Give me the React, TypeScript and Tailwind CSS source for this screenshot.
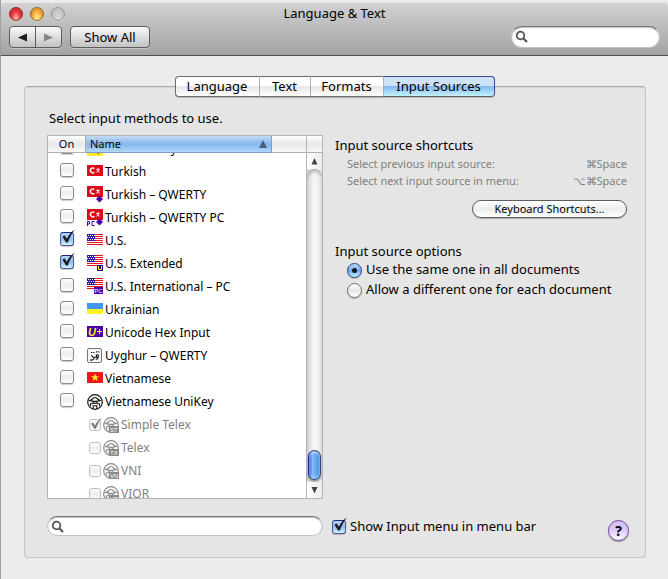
import { useState } from 'react';
import type { ReactNode } from 'react';
import clsx from 'clsx';

type Badge = 'diamond' | 'pc-diamond' | 'U' | 'PC';

const Icon = ({ children }: { children: ReactNode }) => (
  <svg viewBox="0 0 16 18" className="mt-[3px] h-[18px] w-4 shrink-0 self-start" aria-hidden="true">
    {children}
  </svg>
);

const Diamond = () => <path d="M12.5 9.5 16 13l-3.5 3.5L9 13z" fill="#4a00a8" />;

const Turkey = ({ badge }: { badge?: Badge }) => (
  <Icon>
    <g transform={badge ? undefined : 'translate(0 2)'}>
      <rect width="16" height="11" fill="#dd0a18" />
      <path d="M7.4 3.6A2.4 2.4 0 1 0 7.4 7.2" fill="none" stroke="#fff" strokeWidth="1.4" />
      <path d="M9.2 4.3 11 5.2M12.8 4.3 11 5.2M11 3v2.2M11 5.2 9.700 7.500M11 5.200l1.300 2.300" stroke="#fff" strokeWidth=".9" />
    </g>
    {badge && <Diamond />}
    {badge === 'pc-diamond' && (
      <path d="M.5 17v-4.500h2v2.500h-2M7.500 12.500H5v4h2.500" fill="none" stroke="#4a00a8" />
    )}
  </Icon>
);

const UnitedStates = ({ badge }: { badge?: Badge }) => (
  <Icon>
    <g transform={badge ? undefined : 'translate(0 2)'}>
      <rect width="16" height="11" fill="#fff" />
      <path d="M0 .5h16M0 2.5h16M0 4.5h16M0 6.5h16M0 8.5h16M0 10.5h16" stroke="#ee1018" />
      <rect width="8" height="7" fill="#2e16a4" />
      <path d="M1 1.5h7M0 3.5h7M1 5.5h7" stroke="#fff" strokeDasharray="1 1" />
    </g>
    {badge === 'U' && (
      <>
        <rect x="10" y="10" width="6" height="6" fill="#25107c" />
        <path d="M11.5 11v3.5h3V11" fill="none" stroke="#ffee22" />
      </>
    )}
    {badge === 'PC' && (
      <>
        <rect x="7" y="9" width="9" height="7" fill="#4a00a8" />
        <text x="7.2" y="14.8" fontSize="6" fontFamily="Liberation Sans" fill="#fff">PC</text>
      </>
    )}
  </Icon>
);

const Ukraine = () => (
  <Icon>
    <rect y="2" width="16" height="6" fill="#3f97ff" />
    <rect y="8" width="16" height="5" fill="#fdf51e" />
  </Icon>
);

const UnicodeHex = () => (
  <Icon>
    <rect y="2" width="16" height="11" fill="#4a00a8" />
    <text x="1" y="11.5" fontSize="11" fontWeight="bold" fontStyle="italic" fontFamily="Liberation Sans" fill="#ffef24">U</text>
    <path d="M10 7.5h5M12.5 5v5" stroke="#ffef24" />
  </Icon>
);

const Uyghur = () => (
  <Icon>
    <rect x=".5" y="1.5" width="14" height="14" rx="1.5" fill="#f6f6f6" stroke="#777" />
    <path
      d="M3 13c2.500.5 4-.5 4.200-2.800M4 8.800c1.500 0 1.800 1.800 3 1.500h2.500c2.300 0 2.600-2.600.8-2.600-1.400 0-1.500 1.700 0 2M11.500 10c-.5 1.500-1.500 2.300-2.800 2.500"
      fill="none"
      stroke="#111"
      strokeWidth="1.1"
    />
    <path d="M4 5.5h1.3M6.3 5.5h1.3M9 4.8h1.2M11.2 4.8h1.2" stroke="#111" strokeWidth="1.2" />
  </Icon>
);

const Vietnam = () => (
  <Icon>
    <rect y="2" width="16" height="11" fill="#f5141a" />
    <path d="m8 3.4 1 2.9h3.1L9.600 8.100l1 2.900L8 9.200 5.400 11l1-2.900-2.500-1.800H7z" fill="#fff021" />
  </Icon>
);

const Tibet = () => (
  <Icon>
    <rect y="2" width="16" height="14" fill="#ffee22" />
    <path d="M4 10l3 3M12 8 9 12h4M6 9l6 5" fill="none" stroke="#c8601c" strokeWidth="1.3" />
  </Icon>
);

const UniKey = ({ badge }: { badge?: string }) => {
  const ink = badge ? '#8a8a8a' : '#161616';
  return (
    <Icon>
      <circle cx="8" cy="9" r="7.3" fill="#fff" stroke={ink} strokeWidth="1.2" />
      <path
        d="M2.800 7.500C5.500 7 6 4.500 8 4.500s2.500 2.500 5.200 3C11 8.700 5 8.700 2.800 7.500zM5.800 8.400c0 2.600 4.400 2.600 4.400 0M6.200 10.800H3.500v2.500M9.800 10.800h2.700v2.500M6.200 16v-3.200h3.600V16"
        fill="none"
        stroke={ink}
        strokeWidth="1.1"
      />
      {badge && (
        <>
          <rect x="6" y="10" width="10" height="7" fill="#8a8a8a" />
          <text x="7" y="15.700" fontSize="6" fontFamily="Liberation Sans" fill="#fff">{badge}</text>
        </>
      )}
    </Icon>
  );
};

interface Source {
  name: string;
  icon: ReactNode;
  on?: boolean;
  child?: boolean;
}

const sources: Source[] = [
  { name: 'Tibetan – Wylie', icon: <Tibet /> },
  { name: 'Turkish', icon: <Turkey /> },
  { name: 'Turkish – QWERTY', icon: <Turkey badge="diamond" /> },
  { name: 'Turkish – QWERTY PC', icon: <Turkey badge="pc-diamond" /> },
  { name: 'U.S.', icon: <UnitedStates />, on: true },
  { name: 'U.S. Extended', icon: <UnitedStates badge="U" />, on: true },
  { name: 'U.S. International – PC', icon: <UnitedStates badge="PC" /> },
  { name: 'Ukrainian', icon: <Ukraine /> },
  { name: 'Unicode Hex Input', icon: <UnicodeHex /> },
  { name: 'Uyghur – QWERTY', icon: <Uyghur /> },
  { name: 'Vietnamese', icon: <Vietnam /> },
  { name: 'Vietnamese UniKey', icon: <UniKey /> },
  { name: 'Simple Telex', icon: <UniKey badge="ST" />, on: true, child: true },
  { name: 'Telex', icon: <UniKey badge="TX" />, child: true },
  { name: 'VNI', icon: <UniKey badge="VN" />, child: true },
  { name: 'VIQR', icon: <UniKey badge="VR" />, child: true },
];

interface CheckboxProps {
  id: string;
  defaultChecked?: boolean;
  disabled?: boolean;
}

const Checkbox = ({ id, defaultChecked, disabled }: CheckboxProps) => (
  <span className={clsx('relative block shrink-0', disabled ? 'size-3' : 'size-3.5')}>
    <input
      id={id}
      type="checkbox"
      defaultChecked={defaultChecked}
      disabled={disabled}
      className={clsx(
        'peer block size-full appearance-none rounded-[3px] border bg-linear-to-b from-white via-[#ececec] to-white',
        disabled
          ? 'border-[#bdbdbd]'
          : 'border-[#8a8a8a] shadow-[0_1px_1px_#00000033] checked:border-[#4d5a94] checked:border-t-[#1c2a86] checked:from-[#b9d3f5] checked:via-[#8fbdf0] checked:to-[#d3f4ff]'
      )}
    />
    <svg
      viewBox="0 0 16 16"
      className={clsx(
        'pointer-events-none absolute hidden peer-checked:block',
        disabled ? '-top-0.5 left-0 size-3.5 text-[#777]' : '-top-[3px] left-0 size-4 text-[#15181f]'
      )}
      aria-hidden="true"
    >
      <path d="M2.500 7.500 4.800 6.500 6.800 10C8.500 6 11 3 14.800.500 11.800 4.500 9.500 8.500 7.800 13.500H6z" fill="currentColor" />
    </svg>
  </span>
);

const SearchField = ({ label, className }: { label: string; className: string }) => (
  <label className={clsx('relative block', className)}>
    <svg viewBox="0 0 14 14" className="absolute top-1 left-1 size-3.5" aria-hidden="true">
      <circle cx="5.500" cy="5.500" r="3.800" fill="none" stroke="#555" strokeWidth="1.800" />
      <path d="m8.500 8.500 3.500 3.500" stroke="#555" strokeWidth="2.200" />
    </svg>
    <input
      type="search"
      aria-label={label}
      className="block h-full w-full appearance-none rounded-full border border-[#c4c4c4] border-t-[#777] bg-white pr-2 pl-6 text-xs shadow-[inset_0_1px_1px_#00000040] outline-none"
    />
  </label>
);

const Toolbar = () => (
  <header className="flex h-[54px] flex-col rounded-t border-b border-[#505050] bg-linear-to-b from-[#d2d2d2] to-[#a3a3a3] px-2 shadow-[inset_0_1px_0_#e8e8e8]">
    <div className="relative flex h-[23px] items-center">
      <div className="flex gap-[7px]">
        <button aria-label="Close" className="size-3.5 rounded-full border border-[#8d2a28] bg-radial-[at_50%_90%] from-[#ffc0b8] via-[#e8383c] to-[#b81c24] shadow-[0_1px_0_#ffffff66]" />
        <button aria-label="Minimize" className="size-3.5 rounded-full border border-[#95602a] bg-radial-[at_50%_90%] from-[#fff4a0] via-[#f2b03c] to-[#c9741c] shadow-[0_1px_0_#ffffff66]" />
        <button aria-label="Zoom" disabled className="size-3.5 rounded-full border border-[#969696] bg-radial-[at_50%_90%] from-[#dcdcdc] to-[#b4b4b4] shadow-[0_1px_0_#ffffff66]" />
      </div>
      <h1 className="pointer-events-none absolute inset-x-0 text-center text-[13px]">Language &amp; Text</h1>
    </div>
    <div className="mt-px flex h-[22px]">
      <div className="flex rounded border border-[#5c5c5c] bg-linear-to-b from-[#fafafa] to-[#c2c2c2] shadow-[0_1px_0_#ffffff55]">
        <button aria-label="Back" className="flex w-[26px] items-center justify-center border-r border-[#5c5c5c]">
          <svg viewBox="0 0 9 9" className="size-[9px]"><path d="M0 4.500 9 .500v8z" fill="#1c1c1c" /></svg>
        </button>
        <button aria-label="Forward" className="flex w-[25px] items-center justify-center">
          <svg viewBox="0 0 9 9" className="size-[9px]"><path d="M9 4.500 0 .500v8z" fill="#858585" /></svg>
        </button>
      </div>
      <button className="ml-2 w-20 rounded border border-[#5c5c5c] bg-linear-to-b from-[#fafafa] to-[#c2c2c2] text-[13px] leading-5 shadow-[0_1px_0_#ffffff55]">
        Show All
      </button>
      <SearchField label="Search preferences" className="ml-auto h-[22px] w-[149px]" />
    </div>
  </header>
);

const tabs = [
  { name: 'Language', width: 'w-[85px]' },
  { name: 'Text', width: 'w-[51px]' },
  { name: 'Formats', width: 'w-[73px]' },
  { name: 'Input Sources', width: 'w-[111px]' },
];

const Tabs = () => {
  const [active, setActive] = useState('Input Sources');
  return (
    <div role="tablist" className="relative z-10 mx-auto -mb-[11px] flex h-[21px] w-fit">
      {tabs.map((tab) => (
        <button
          key={tab.name}
          role="tab"
          aria-selected={active === tab.name}
          onClick={() => setActive(tab.name)}
          className={clsx(
            'border-y border-r text-[13px] leading-[19px] shadow-[0_1px_1px_#00000033] first:rounded-l last:rounded-r first:border-l',
            tab.width,
            active === tab.name
              ? 'border-[#3d4a91] border-b-[#5a5f70] bg-linear-to-b from-[#cfe3f8] from-45% via-[#86baf0] via-50% to-[#c4f2ff]'
              : 'border-y-[#6c6c6c] border-r-[#b4b4b4] border-l-[#6c6c6c] bg-linear-to-b from-white from-45% via-[#e6e6e6] via-50% to-white'
          )}
        >
          {tab.name}
        </button>
      ))}
    </div>
  );
};

const headerCell = 'border-b border-[#b0b0b0] bg-linear-to-b from-white via-[#e8e8e8] to-[#f8f8f8]';

const SourceList = () => (
  <div className="flex h-[364px] border border-[#b4b4b4] bg-white">
    <table className="flex min-w-0 flex-1 flex-col text-xs">
      <thead className="block shrink-0">
        <tr className="flex h-[17px] text-left leading-4">
          <th className={clsx(headerCell, 'w-[38px] border-r text-center text-[11px] font-normal')}>On</th>
          <th className="flex flex-1 items-center border-r border-b border-[#7d9fd0] bg-linear-to-b from-[#c5dcf6] via-[#86b6ee] to-[#b0d6fa] pr-1 pl-1 text-[11px] font-normal">
            Name
            <svg viewBox="0 0 8 8" className="ml-auto size-2" aria-hidden="true"><path d="M4 0 8 8H0z" fill="#46607f" /></svg>
          </th>
          <th className={clsx(headerCell, 'w-[34px]')} />
        </tr>
      </thead>
      <tbody className="block min-h-0 flex-1 overflow-hidden">
        {sources.map((source) => {
          const id = `source-${source.name}`;
          const box = <Checkbox id={id} defaultChecked={source.on} disabled={source.child} />;
          return (
            <tr key={source.name} className="flex h-[23px] first:-mt-4">
              <td className="w-[38px] pt-[3px] pl-3">{!source.child && box}</td>
              <td className={clsx('flex flex-1 items-center gap-0.5', source.child ? 'pl-[3px] text-[#808080]' : 'pl-px')}>
                {source.child && box}
                {source.icon}
                <label htmlFor={id} className="whitespace-nowrap">{source.name}</label>
              </td>
            </tr>
          );
        })}
      </tbody>
    </table>
    <div className="flex w-4 flex-col border-l border-[#b4b4b4] bg-linear-to-r from-[#d6d6d6] via-[#f8f8f8] to-[#e6e6e6]">
      <div className={clsx(headerCell, 'h-[17px]')} />
      <button aria-label="Scroll up" className="flex h-4 items-center justify-center bg-linear-to-r from-white to-[#ececec]">
        <svg viewBox="0 0 7 7" className="size-[7px]"><path d="M3.500 0 6.500 6.500h-6z" fill="#444" /></svg>
      </button>
      <div className="flex flex-1 flex-col justify-end rounded-t-lg border-t border-[#9c9c9c] px-px shadow-[inset_0_3px_3px_#0000002b]">
        <div className="h-[30px] rounded-full border border-[#35447c] border-l-[#2020a8] bg-linear-to-r from-[#3f70dc] from-10% via-[#8cbcf6] via-30% to-[#3f8ae6] shadow-[0_2px_2px_#00000066,inset_0_2px_2px_#ffffff77,inset_0_-2px_3px_#a0e4ff99]" />
      </div>
      <button aria-label="Scroll down" className="mt-0.5 flex h-4 items-center justify-center bg-linear-to-r from-white to-[#ececec]">
        <svg viewBox="0 0 7 7" className="size-[7px]"><path d="M3.500 6.500 6.500 0h-6z" fill="#444" /></svg>
      </button>
    </div>
  </div>
);

const Radio = ({ children, defaultChecked }: { children: ReactNode; defaultChecked?: boolean }) => (
  <label className="flex h-5 items-center gap-1">
    <span className="relative block size-[15px] shrink-0">
      <input
        type="radio"
        name="scope"
        defaultChecked={defaultChecked}
        className="peer block size-full appearance-none rounded-full border border-[#6f6f6f] bg-linear-to-b from-white via-[#e6e6e6] to-white shadow-[0_1px_1px_#00000040] checked:border-[#2c4287] checked:from-[#c0daf8] checked:via-[#6fa9ec] checked:to-[#c2f0ff]"
      />
      <span className="pointer-events-none absolute top-[5px] left-[5px] hidden size-[5px] rounded-full bg-[#101828] peer-checked:block" />
    </span>
    {children}
  </label>
);

const Options = () => (
  <div className="text-[13px]">
    <h2 className="leading-5">Input source shortcuts</h2>
    <dl className="grid grid-cols-[1fr_auto] pl-3 text-[11px] leading-[17px] text-[#808080]">
      <dt>Select previous input source:</dt>
      <dd className="text-right">⌘Space</dd>
      <dt>Select next input source in menu:</dt>
      <dd className="text-right">⌥⌘Space</dd>
    </dl>
    <button className="mt-[11px] ml-auto block h-[18px] w-[155px] rounded-full border border-[#5e5e5e] bg-linear-to-b from-white via-[#ededed] to-white text-[11px] leading-4 shadow-[0_1px_1px_#00000040]">
      Keyboard Shortcuts…
    </button>
    <fieldset className="mt-6">
      <legend className="leading-[18px]">Input source options</legend>
      <div className="pl-3">
        <Radio defaultChecked>Use the same one in all documents</Radio>
        <Radio>Allow a different one for each document</Radio>
      </div>
    </fieldset>
  </div>
);

const App = () => (
  <div className="min-h-screen border-l border-[#a0a0a0] bg-[#ececec] pt-0.5 font-['Noto_Sans','Liberation_Sans',sans-serif] text-black">
    <Toolbar />
    <main className="px-[23px] pt-5 pb-[21px]">
      <Tabs />
      <section className="-mr-px rounded border border-[#c4c4c4] border-t-[#aaa] bg-[#e5e5e5] pt-[21px] pr-[18px] pb-3.5 pl-[22px] shadow-[inset_0_1px_1px_#00000014]">
        <p className="pl-0.5 text-[13px] leading-5">Select input methods to use.</p>
        <div className="mt-[7px] grid grid-cols-[276px_1fr] gap-x-3">
          <SourceList />
          <Options />
        </div>
        <div className="mt-4 flex h-7 items-start">
          <SearchField label="Search input sources" className="mt-px h-5 w-[276px]" />
          <div className="ml-[9px] flex h-6 items-center gap-1">
            <Checkbox id="show-menu" defaultChecked />
            <label htmlFor="show-menu" className="text-[13px]">Show Input menu in menu bar</label>
          </div>
          <button
            aria-label="Help"
            className="mt-[5px] -mr-0.5 ml-auto size-[21px] rounded-full border border-[#6d4a9c] bg-linear-to-b from-[#d3bdf5] via-[#dccbfa] to-white text-sm leading-[19px] font-bold shadow-[0_1px_1px_#00000066]"
          >
            ?
          </button>
        </div>
      </section>
    </main>
  </div>
);

export default App;
